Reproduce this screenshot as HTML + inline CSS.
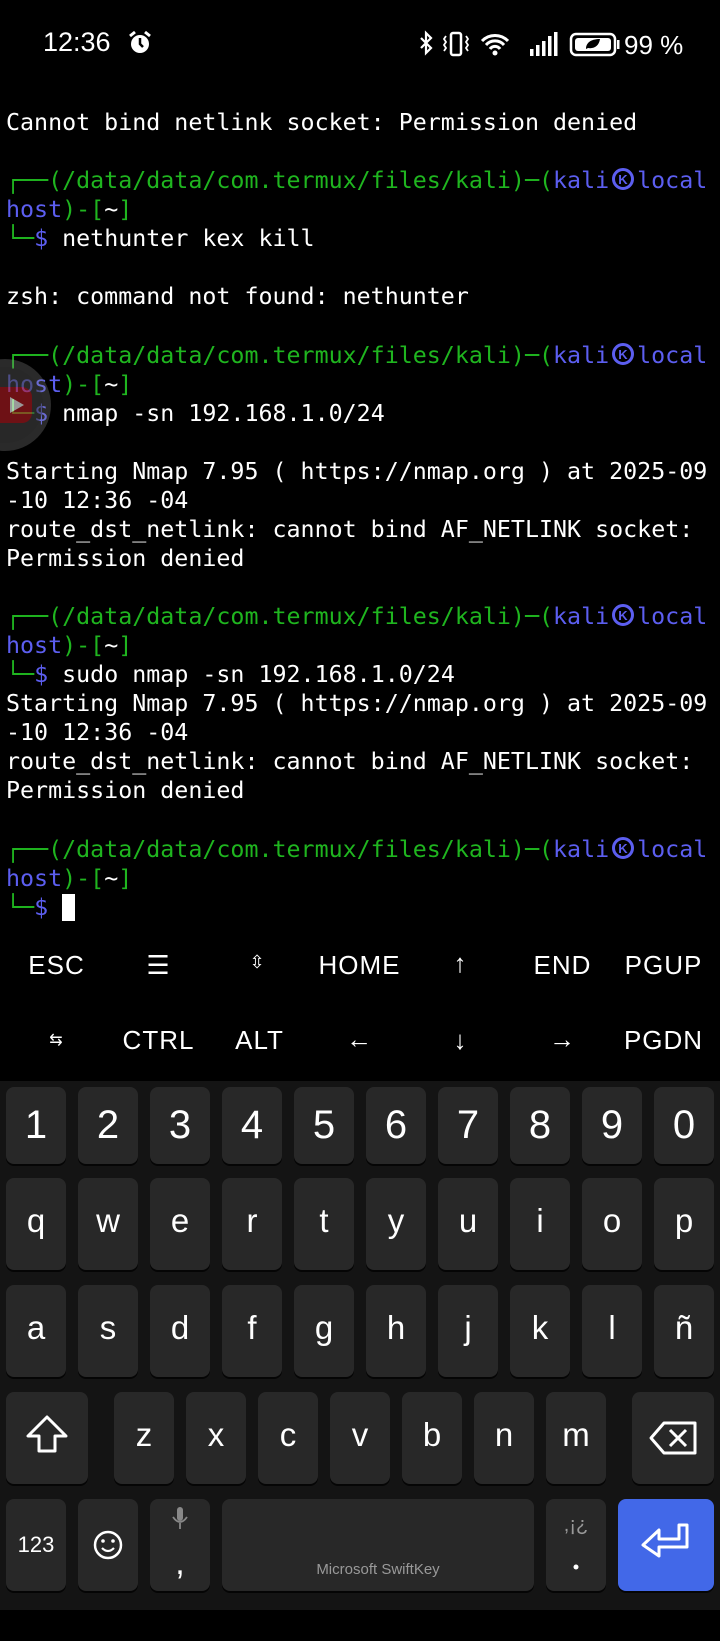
<!DOCTYPE html>
<html><head><meta charset="utf-8"><style>
*{margin:0;padding:0;box-sizing:border-box}
body{width:720px;height:1610px;background:#000;position:relative;overflow:hidden;font-family:"Liberation Sans",sans-serif;color:#fff}
.sb{position:absolute;top:24px;height:36px;font-size:26px;line-height:36px}
pre{position:absolute;left:6px;top:108px;font-family:"DejaVu Sans Mono","Liberation Mono",monospace;font-size:23.3px;line-height:29.06px;color:#fff;white-space:pre}
.g{color:#1fb51f}.b{color:#5c5ef0}
.at{display:inline-block;width:28px;height:20px;position:relative}
.at svg{position:absolute;left:2px;top:-1px}
.cur{display:inline-block;width:13px;height:27px;background:#fff;vertical-align:-6px}
.xk{position:absolute;font-size:26px;text-align:center;width:103px;letter-spacing:1px}
.kb{position:absolute;left:0;top:1081px;width:720px;height:529px;background:#141414}
.k{position:absolute;width:60px;background:#282828;border-radius:8px;box-shadow:0 2px 0 #050505;text-align:center;color:#fff}
.d{top:1087px;height:77px;font-size:40px;line-height:77px}
.r1{top:1178px;height:92px;font-size:33px;line-height:86px}
.r2{top:1285px;height:92px;font-size:33px;line-height:86px}
.r3{top:1392px;height:92px;font-size:33px;line-height:86px}
.r4{top:1499px;height:92px}
</style></head><body>
<div class="sb" style="left:43px;font-size:27px">12:36</div>
<svg style="position:absolute;left:127px;top:30px" width="26" height="26" viewBox="0 0 26 26"><circle cx="13" cy="14" r="9" fill="#fff"/><path d="M3 6l5-4M23 6l-5-4" stroke="#fff" stroke-width="3"/><path d="M13 8v6l3 3" stroke="#000" stroke-width="2.5" fill="none"/></svg>
<svg style="position:absolute;left:418px;top:30px" width="265" height="28" viewBox="0 0 265 28">
<path d="M3 8l10 10-5 5V3l5 5-10 10" stroke="#fff" stroke-width="2.2" fill="none"/>
<rect x="33" y="3" width="10" height="22" rx="2" stroke="#fff" stroke-width="2.5" fill="none"/>
<path d="M28 6l-2 3 2 3-2 3 2 3-2 3M48 6l2 3-2 3 2 3-2 3 2 3" stroke="#fff" stroke-width="1.8" fill="none"/>
<path d="M64 11a18 18 0 0 1 26 0M68 15a12 12 0 0 1 18 0M72 19a6 6 0 0 1 10 0" stroke="#fff" stroke-width="3" fill="none"/><circle cx="77" cy="23" r="2.5" fill="#fff"/>
<rect x="112" y="19" width="3.5" height="7" fill="#fff"/><rect x="118" y="15" width="3.5" height="11" fill="#fff"/><rect x="124" y="11" width="3.5" height="15" fill="#fff"/><rect x="130" y="6" width="3.5" height="20" fill="#fff"/><rect x="136" y="2" width="3.5" height="24" fill="#fff"/>
<rect x="153" y="4" width="44" height="21" rx="5" stroke="#fff" stroke-width="2.5" fill="none"/><rect x="157" y="8" width="36" height="13" rx="3" fill="#fff"/>
<path d="M168 19c0-7 6-10 14-10-1 7-6 10-12 9" fill="#000"/><rect x="199" y="10" width="2.5" height="9" fill="#fff"/>
<text x="206" y="24" font-family="Liberation Sans" font-size="26" fill="#fff">99 %</text>
</svg>
<pre>Cannot bind netlink socket: Permission denied

<span class="g">┌──(/data/data/com.termux/files/kali)─(</span><span class="b">kali<span class="at"><svg width="24" height="24" viewBox="0 0 24 24"><circle cx="12" cy="12" r="9.5" stroke="#5c5ef0" stroke-width="3" fill="none"/><text x="12" y="17" text-anchor="middle" font-family="Liberation Sans" font-weight="bold" font-size="13" fill="#5c5ef0">K</text></svg></span>local
host</span><span class="g">)-[</span>~<span class="g">]
└─</span><span class="b">$</span> nethunter kex kill

zsh: command not found: nethunter

<span class="g">┌──(/data/data/com.termux/files/kali)─(</span><span class="b">kali<span class="at"><svg width="24" height="24" viewBox="0 0 24 24"><circle cx="12" cy="12" r="9.5" stroke="#5c5ef0" stroke-width="3" fill="none"/><text x="12" y="17" text-anchor="middle" font-family="Liberation Sans" font-weight="bold" font-size="13" fill="#5c5ef0">K</text></svg></span>local
host</span><span class="g">)-[</span>~<span class="g">]
└─</span><span class="b">$</span> nmap -sn 192.168.1.0/24

Starting Nmap 7.95 ( https://nmap.org ) at 2025-09
-10 12:36 -04
route_dst_netlink: cannot bind AF_NETLINK socket:
Permission denied

<span class="g">┌──(/data/data/com.termux/files/kali)─(</span><span class="b">kali<span class="at"><svg width="24" height="24" viewBox="0 0 24 24"><circle cx="12" cy="12" r="9.5" stroke="#5c5ef0" stroke-width="3" fill="none"/><text x="12" y="17" text-anchor="middle" font-family="Liberation Sans" font-weight="bold" font-size="13" fill="#5c5ef0">K</text></svg></span>local
host</span><span class="g">)-[</span>~<span class="g">]
└─</span><span class="b">$</span> sudo nmap -sn 192.168.1.0/24
Starting Nmap 7.95 ( https://nmap.org ) at 2025-09
-10 12:36 -04
route_dst_netlink: cannot bind AF_NETLINK socket:
Permission denied

<span class="g">┌──(/data/data/com.termux/files/kali)─(</span><span class="b">kali<span class="at"><svg width="24" height="24" viewBox="0 0 24 24"><circle cx="12" cy="12" r="9.5" stroke="#5c5ef0" stroke-width="3" fill="none"/><text x="12" y="17" text-anchor="middle" font-family="Liberation Sans" font-weight="bold" font-size="13" fill="#5c5ef0">K</text></svg></span>local
host</span><span class="g">)-[</span>~<span class="g">]
└─</span><span class="b">$</span> <span class="cur"></span></pre>
<svg style="position:absolute;left:-45px;top:355px;opacity:0.6" width="100" height="100" viewBox="0 0 100 100"><circle cx="50" cy="50" r="46" fill="rgba(140,140,140,0.5)"/><circle cx="50" cy="50" r="38" fill="#444"/><rect x="25" y="32" width="52" height="36" rx="10" fill="#b81d24"/><path d="M55 42l14 8-14 8z" fill="#fff"/></svg>
<div class="xk" style="left:5px;top:950px">ESC</div>
<div class="xk" style="left:107px;top:950px">☰</div>
<div class="xk" style="left:206px;top:952px;font-size:18px">⇳</div>
<div class="xk" style="left:308px;top:950px">HOME</div>
<div class="xk" style="left:409px;top:948px">↑</div>
<div class="xk" style="left:511px;top:950px">END</div>
<div class="xk" style="left:612px;top:950px">PGUP</div>
<div class="xk" style="left:5px;top:1030px;font-size:16px">⇆</div>
<div class="xk" style="left:107px;top:1025px">CTRL</div>
<div class="xk" style="left:208px;top:1025px">ALT</div>
<div class="xk" style="left:308px;top:1024px">←</div>
<div class="xk" style="left:409px;top:1025px">↓</div>
<div class="xk" style="left:511px;top:1024px">→</div>
<div class="xk" style="left:612px;top:1025px">PGDN</div>
<div class="kb"></div>
<div class="k d" style="left:6px">1</div><div class="k d" style="left:78px">2</div><div class="k d" style="left:150px">3</div><div class="k d" style="left:222px">4</div><div class="k d" style="left:294px">5</div><div class="k d" style="left:366px">6</div><div class="k d" style="left:438px">7</div><div class="k d" style="left:510px">8</div><div class="k d" style="left:582px">9</div><div class="k d" style="left:654px">0</div>
<div class="k r1" style="left:6px">q</div><div class="k r1" style="left:78px">w</div><div class="k r1" style="left:150px">e</div><div class="k r1" style="left:222px">r</div><div class="k r1" style="left:294px">t</div><div class="k r1" style="left:366px">y</div><div class="k r1" style="left:438px">u</div><div class="k r1" style="left:510px">i</div><div class="k r1" style="left:582px">o</div><div class="k r1" style="left:654px">p</div>
<div class="k r2" style="left:6px">a</div><div class="k r2" style="left:78px">s</div><div class="k r2" style="left:150px">d</div><div class="k r2" style="left:222px">f</div><div class="k r2" style="left:294px">g</div><div class="k r2" style="left:366px">h</div><div class="k r2" style="left:438px">j</div><div class="k r2" style="left:510px">k</div><div class="k r2" style="left:582px">l</div><div class="k r2" style="left:654px">ñ</div>
<div class="k r3" style="left:6px;width:82px"><svg width="82" height="92" viewBox="0 0 82 92"><path d="M41 25l-19 19h11v15h16V44h11z" stroke="#fff" stroke-width="3" fill="none" stroke-linejoin="round"/></svg></div>
<div class="k r3" style="left:114px">z</div><div class="k r3" style="left:186px">x</div><div class="k r3" style="left:258px">c</div><div class="k r3" style="left:330px">v</div><div class="k r3" style="left:402px">b</div><div class="k r3" style="left:474px">n</div><div class="k r3" style="left:546px">m</div>
<div class="k r3" style="left:632px;width:82px"><svg width="82" height="92" viewBox="0 0 82 92"><path d="M32 31h31v30H32L19 46z" stroke="#fff" stroke-width="3" fill="none" stroke-linejoin="round"/><path d="M38 38l16 16M54 38L38 54" stroke="#fff" stroke-width="3"/></svg></div>
<div class="k r4" style="left:6px;font-size:22px;line-height:92px">123</div>
<div class="k r4" style="left:78px"><svg width="60" height="92" viewBox="0 0 60 92"><circle cx="30" cy="46" r="13" stroke="#fff" stroke-width="2.5" fill="none"/><circle cx="25" cy="42" r="1.8" fill="#fff"/><circle cx="35" cy="42" r="1.8" fill="#fff"/><path d="M24 49q6 6 12 0" stroke="#fff" stroke-width="2.2" fill="none"/></svg></div>
<div class="k r4" style="left:150px"><svg width="60" height="92" viewBox="0 0 60 92"><rect x="27" y="8" width="6" height="14" rx="3" fill="#888"/><path d="M23 18q7 10 14 0M30 24v6" stroke="#888" stroke-width="1.8" fill="none"/><text x="30" y="75" text-anchor="middle" font-family="Liberation Sans" font-size="34" fill="#fff">,</text></svg></div>
<div class="k r4" style="left:222px;width:312px;font-size:15px;color:#999;line-height:142px">Microsoft SwiftKey</div>
<div class="k r4" style="left:546px"><svg width="60" height="92" viewBox="0 0 60 92"><text x="30" y="32" text-anchor="middle" font-family="Liberation Sans" font-size="20" fill="#999">,¡¿</text><circle cx="30" cy="68" r="2.5" fill="#fff"/></svg></div>
<div class="k r4" style="left:618px;width:96px;background:#4268e8"><svg width="96" height="92" viewBox="0 0 96 92"><path d="M25 46l16-15v9h20V26h8v22H41v9z" stroke="#fff" stroke-width="3" fill="none" stroke-linejoin="round"/></svg></div>
</body></html>
